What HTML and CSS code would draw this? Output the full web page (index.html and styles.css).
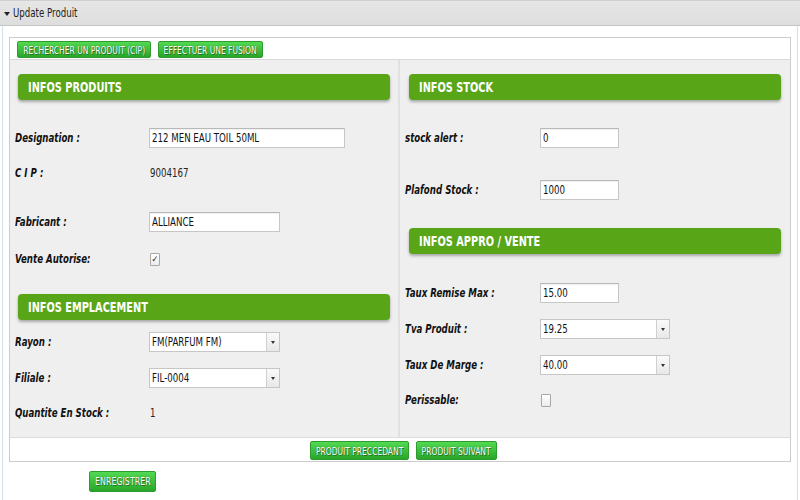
FILE: index.html
```html
<!DOCTYPE html>
<html>
<head>
<meta charset="utf-8">
<link rel="stylesheet" href="styles.css">
</head>
<body>
<div class="panel">
  <div class="panel-head"><span class="caret"></span><span class="t">Update Produit</span></div>
  <div class="panel-body">
    <div class="box">
      <div class="toolbar">
        <span class="btn btn-top w134"><span class="t">RECHERCHER UN PRODUIT (CIP)</span></span>
        <span class="btn btn-top w105"><span class="t">EFFECTUER UNE FUSION</span></span>
      </div>
      <div class="content">
        <div class="col col-left">
          <div class="sec"><span class="t">INFOS PRODUITS</span></div>
          <div class="row mt28"><span class="lbl"><span class="t">Designation :</span></span><span class="input w196"><span class="t">212 MEN EAU TOIL 50ML</span></span></div>
          <div class="row mt15"><span class="lbl"><span class="t">C I P :</span></span><span class="val"><span class="t">9004167</span></span></div>
          <div class="row mt29"><span class="lbl"><span class="t">Fabricant :</span></span><span class="input w131"><span class="t">ALLIANCE</span></span></div>
          <div class="row mt17"><span class="lbl"><span class="t">Vente Autorise:</span></span><span class="check">&#10003;</span></div>
          <div class="sec mt25"><span class="t">INFOS EMPLACEMENT</span></div>
          <div class="row mt12"><span class="lbl"><span class="t">Rayon :</span></span><span class="select w131"><span class="sel-val"><span class="t">FM(PARFUM FM)</span></span><span class="arrow"></span></span></div>
          <div class="row mt16"><span class="lbl"><span class="t">Filiale :</span></span><span class="select w131"><span class="sel-val"><span class="t">FIL-0004</span></span><span class="arrow"></span></span></div>
          <div class="row mt15"><span class="lbl"><span class="t">Quantite En Stock :</span></span><span class="val"><span class="t">1</span></span></div>
        </div>
        <div class="col col-right">
          <div class="sec"><span class="t">INFOS STOCK</span></div>
          <div class="row mt28"><span class="lbl"><span class="t">stock alert :</span></span><span class="input w79"><span class="t">0</span></span></div>
          <div class="row mt32"><span class="lbl"><span class="t">Plafond Stock :</span></span><span class="input w79"><span class="t">1000</span></span></div>
          <div class="sec mt28"><span class="t">INFOS APPRO / VENTE</span></div>
          <div class="row mt29"><span class="lbl"><span class="t">Taux Remise Max :</span></span><span class="input w79"><span class="t">15.00</span></span></div>
          <div class="row mt16"><span class="lbl"><span class="t">Tva Produit :</span></span><span class="select w130"><span class="sel-val"><span class="t">19.25</span></span><span class="arrow"></span></span></div>
          <div class="row mt16"><span class="lbl"><span class="t">Taux De Marge :</span></span><span class="select w130"><span class="sel-val"><span class="t">40.00</span></span><span class="arrow"></span></span></div>
          <div class="row mt15"><span class="lbl"><span class="t">Perissable:</span></span><span class="check"></span></div>
        </div>
      </div>
      <div class="footer">
        <span class="btn btn-nav w99"><span class="t">PRODUIT PRECCEDANT</span></span>
        <span class="btn btn-nav w81"><span class="t">PRODUIT SUIVANT</span></span>
      </div>
    </div>
    <div class="save-wrap"><span class="btn btn-save"><span class="t">ENREGISTRER</span></span></div>
  </div>
</div>
</body>
</html>
```
FILE: styles.css
```css
html, body {
  margin: 0;
  padding: 0;
  background: #ffffff;
  height: 100%;
}
body {
  font-family: "DejaVu Sans Condensed", "DejaVu Sans", sans-serif;
  font-size: 12px;
  color: #1a1a1a;
}
.t {
  display: inline-block;
  white-space: nowrap;
  transform: scaleX(0.8);
  transform-origin: left center;
}
.panel {
  height: 100%;
  display: flex;
  flex-direction: column;
}
.panel-head {
  box-sizing: border-box;
  height: 26px;
  background: linear-gradient(#e6e6e6, #dedede);
  border-top: 1px solid #d0d0d0;
  border-bottom: 1px solid #c4c4c4;
  display: flex;
  align-items: center;
  padding-left: 4px;
  font-size: 12px;
  color: #222;
}
.caret {
  width: 0;
  height: 0;
  border-left: 3px solid transparent;
  border-right: 3px solid transparent;
  border-top: 4px solid #222;
  margin-right: 3px;
  margin-top: 1px;
}
.panel-body {
  flex: 1;
  margin: 0 2px;
  border-left: 1px solid #d3e1e6;
  border-right: 1px solid #d3e1e6;
  padding: 11px 6px 0 6px;
}
.box {
  border: 1px solid #cccccc;
  background: #ffffff;
}
.toolbar {
  box-sizing: border-box;
  height: 22px;
  padding: 3px 0 0 7px;
  border-bottom: 1px solid #d8d8d8;
  display: flex;
  gap: 7px;
  align-items: flex-start;
}
.btn {
  display: inline-flex;
  align-items: center;
  justify-content: center;
  box-sizing: border-box;
  color: #ffffff;
  background: linear-gradient(#52d952, #29a629);
  border: 1px solid #2f9a2f;
  border-radius: 2px;
  text-shadow: 0 0 1px #1d5d1d, 1px 1px 0 rgba(0,0,0,0.35);
  white-space: nowrap;
  overflow: visible;
}
.btn .t {
  transform-origin: center center;
}
.btn-top {
  height: 17px;
  font-size: 10.5px;
}
.btn-nav {
  height: 19px;
  font-size: 10.5px;
}
.btn-save {
  height: 21px;
  width: 67px;
  font-size: 11px;
}
.w134 { width: 134px; }
.w105 { width: 105px; }
.w99 { width: 99px; }
.w81 { width: 81px; }
.content {
  display: grid;
  grid-template-columns: 390px 1fr;
  background: #efefef;
  height: 377px;
}
.col {
  padding-top: 14px;
  box-sizing: border-box;
}
.col-left {
  border-right: 2px solid #e1e1e1;
  padding-left: 8px;
  padding-right: 8px;
}
.col-right {
  padding-left: 9px;
  padding-right: 9px;
}
.sec {
  height: 26px;
  background: #58a618;
  border-radius: 4px;
  box-shadow: 0 2px 3px rgba(0,0,0,0.3);
  color: #ffffff;
  font-weight: bold;
  font-size: 13.6px;
  display: flex;
  align-items: center;
  padding-left: 10px;
}
.row {
  height: 20px;
  display: flex;
  align-items: center;
}
.col-left .row { margin-left: -3px; }
.col-right .row { margin-left: -4px; }
.lbl {
  width: 134px;
  flex: none;
  font-weight: bold;
  font-style: italic;
  color: #111;
}
.col-right .lbl { width: 135px; }
.val {
  padding-left: 1px;
  color: #222;
}
.input {
  box-sizing: border-box;
  height: 20px;
  background: #ffffff;
  border: 1px solid #c6c6c6;
  border-top-color: #b8b8b8;
  box-shadow: inset 0 1px 1px rgba(0,0,0,0.06);
  display: flex;
  align-items: center;
  padding-left: 2px;
  color: #111;
}
.w196 { width: 196px; }
.w131 { width: 131px; }
.w130 { width: 130px; }
.w79 { width: 79px; }
.select {
  box-sizing: border-box;
  height: 20px;
  background: #ffffff;
  border: 1px solid #c6c6c6;
  display: flex;
  align-items: stretch;
}
.sel-val {
  flex: 1;
  display: flex;
  align-items: center;
  padding-left: 2px;
  color: #111;
}
.arrow {
  width: 12px;
  border-left: 1px solid #d0d0d0;
  background: linear-gradient(#fafafa, #e8e8e8);
  position: relative;
}
.arrow::after {
  content: "";
  position: absolute;
  left: 4px;
  top: 8px;
  border-left: 2px solid transparent;
  border-right: 2px solid transparent;
  border-top: 3px solid #333;
}
.check {
  box-sizing: border-box;
  width: 10px;
  height: 13px;
  border: 1px solid #a8a8a8;
  border-radius: 1px;
  background: linear-gradient(#ffffff, #ececec);
  font-size: 9px;
  line-height: 11px;
  text-align: center;
  color: #111;
  margin-left: 1px;
}
.mt12 { margin-top: 12px; }
.mt15 { margin-top: 15px; }
.mt16 { margin-top: 16px; }
.mt17 { margin-top: 17px; }
.mt25 { margin-top: 25px; }
.mt28 { margin-top: 28px; }
.mt29 { margin-top: 29px; }
.mt32 { margin-top: 32px; }
.footer {
  height: 24px;
  border-top: 1px solid #dddddd;
  display: flex;
  justify-content: center;
  align-items: flex-start;
  padding-top: 3px;
  box-sizing: border-box;
  gap: 7px;
  padding-left: 7px;
}
.save-wrap {
  padding: 9px 0 0 80px;
}
```
